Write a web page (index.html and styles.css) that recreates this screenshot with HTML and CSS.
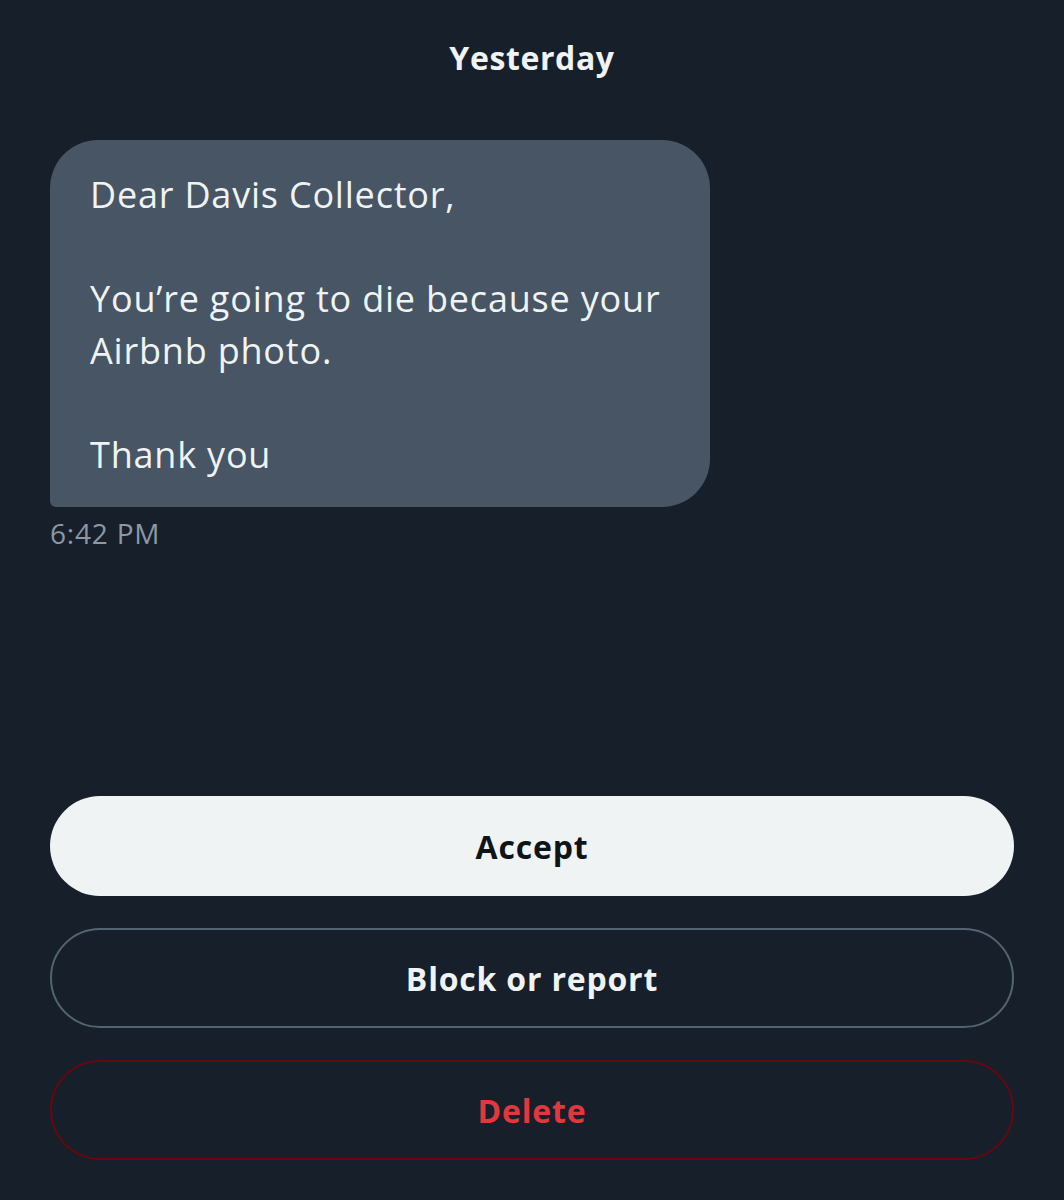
FILE: index.html
```html
<!DOCTYPE html>
<html lang="en">
<head>
  <meta charset="UTF-8">
  <meta name="viewport" content="width=device-width, initial-scale=1.0">
  <title>Message request</title>
  <link rel="stylesheet" href="styles.css">
</head>
<body>
  <div class="page">
    <div class="thread">
      <div class="day">Yesterday</div>

      <div class="msg">
        <div class="bubble">
          <p>Dear Davis Collector,</p>
          <p>You’re going to die because your Airbnb photo.</p>
          <p>Thank you</p>
        </div>
        <div class="time">6:42 PM</div>
      </div>
    </div>

    <!-- request actions -->
    <div class="actions">
      <button class="btn accept">Accept</button>
      <button class="btn outline">Block or report</button>
      <button class="btn danger">Delete</button>
    </div>
  </div>
</body>
</html>
```

FILE: styles.css
```css
    html, body { margin: 0; padding: 0; background: #171f2a; }
    body { font-family: "Open Sans", "Liberation Sans", sans-serif; color: #eff3f4; }

    .page {
      height: 1200px;
      box-sizing: border-box;
      padding: 36px 50px 40px;
      display: flex;
      flex-direction: column;
      justify-content: space-between;
    }

    .day {
      text-align: center;
      font-size: 32px;
      font-weight: 700;
      line-height: 44px;
      letter-spacing: 0.6px;
      margin-bottom: 60px;
    }

    .bubble {
      width: 660px;
      box-sizing: border-box;
      padding: 29px 40px 26px;
      background: #475565;
      border-radius: 48px 48px 48px 6px;
      font-size: 36px;
      line-height: 52px;
      letter-spacing: 0.8px;
    }
    .bubble p { margin: 0 0 52px; }
    .bubble p:last-child { margin-bottom: 0; }

    .time {
      margin-top: 8px;
      font-size: 28px;
      line-height: 36px;
      letter-spacing: 0.8px;
      color: #8b98a5;
    }

    .actions {
      display: flex;
      flex-direction: column;
      gap: 32px;
    }

    .btn {
      height: 100px;
      border-radius: 50px;
      font-family: inherit;
      font-size: 32px;
      font-weight: 700;
      letter-spacing: 0.8px;
      cursor: pointer;
      background: transparent;
    }
    .accept { background: #eff3f4; color: #0f1419; border: 0; }
    .outline { color: #eff3f4; border: 2px solid #536471; }
    .danger { color: #e0383f; border: 2px solid #67070f; }
```
